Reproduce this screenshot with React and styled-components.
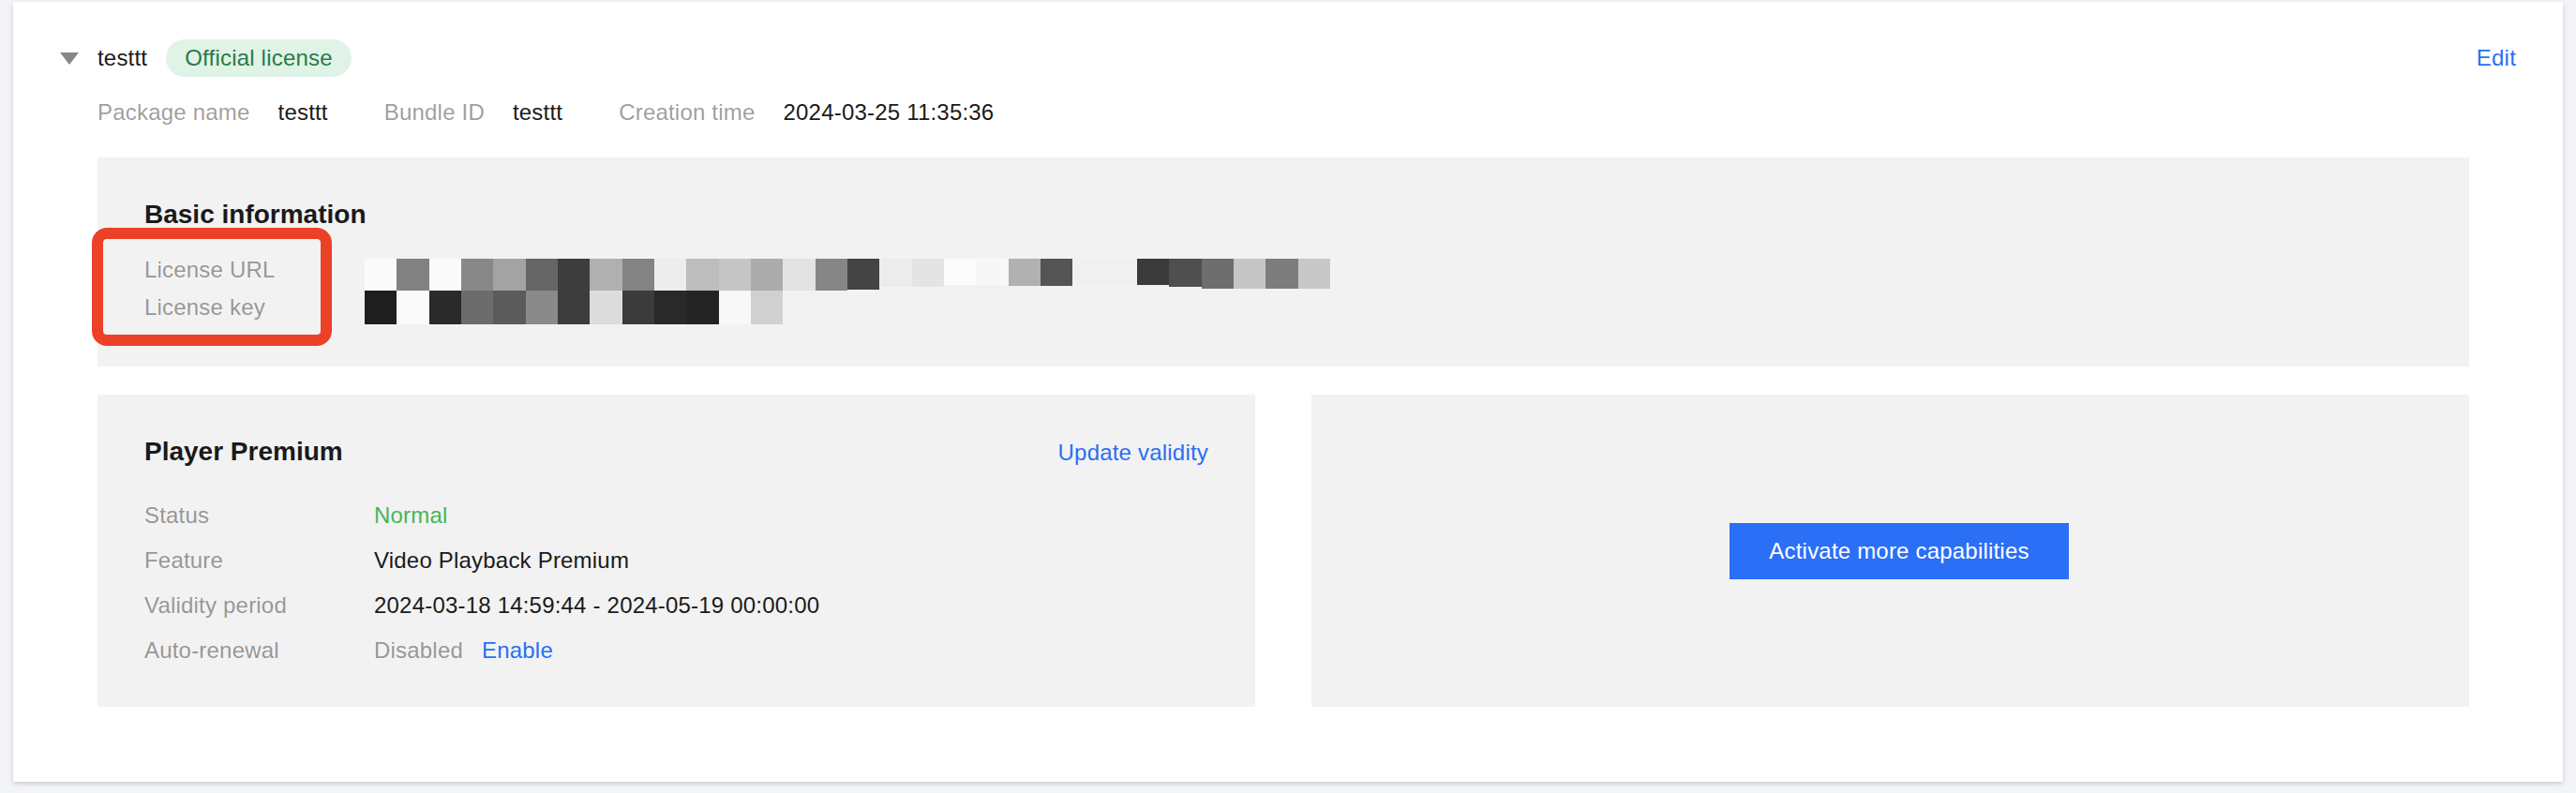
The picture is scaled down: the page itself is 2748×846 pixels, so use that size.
import React from "react";
import styled, { createGlobalStyle } from "styled-components";

const Global = createGlobalStyle`
  html, body { margin: 0; padding: 0; background: #f3f4f8; }
  body { font-family: "Liberation Sans", Arial, Helvetica, sans-serif; color: #1a1a1a; }
  * { box-sizing: border-box; }
`;

const Page = styled.div`
  padding: 2px 14px 13px 14px;
  min-height: 846px;
`;

const Card = styled.div`
  background: #ffffff;
  box-shadow: 0 2px 5px rgba(54, 58, 80, 0.22);
  padding: 40px 50px 80px 50px;
  letter-spacing: 0.2px;
`;

const Header = styled.div`
  display: flex;
  align-items: center;
  justify-content: space-between;
  height: 40px;
`;

const HeaderLeft = styled.div`
  display: flex;
  align-items: center;
`;

const Caret = styled.svg`
  width: 20px;
  height: 13px;
  margin-right: 20px;
  display: block;
`;

const Name = styled.span`
  font-size: 24px;
  line-height: 40px;
  color: #1a1a1a;
  margin-right: 20px;
`;

const Pill = styled.span`
  display: inline-flex;
  align-items: center;
  height: 40px;
  padding: 0 20px;
  border-radius: 20px;
  background: #dff3e6;
  color: #2b7a47;
  font-size: 24px;
`;

const Link = styled.a`
  font-size: 24px;
  color: #2a6ef5;
  text-decoration: none;
  cursor: pointer;
  margin-left: ${(p) => p.$gap || 0}px;
`;

const Body = styled.div`
  margin: 0 50px 0 40px;
`;

const MetaRow = styled.div`
  display: flex;
  margin-top: 20px;
  line-height: 36px;
  font-size: 24px;
`;

const MetaItem = styled.div`
  display: flex;
  gap: 30px;
  margin-right: 60px;
`;

const Label = styled.span`
  color: rgba(0, 0, 0, 0.4);
  font-size: 24px;
`;

const Value = styled.span`
  color: ${(p) => p.$color || "#1a1a1a"};
  font-size: 24px;
`;

const Panel = styled.div`
  position: relative;
  background: #f2f2f2;
  padding: ${(p) => p.$pad || "40px 50px"};
  margin-top: ${(p) => p.$mt || 0}px;
`;

const PanelHead = styled.div`
  display: flex;
  justify-content: space-between;
  align-items: baseline;
  line-height: 42px;
`;

const Title = styled.h3`
  margin: 0;
  font-size: 28px;
  font-weight: 700;
  line-height: 42px;
  letter-spacing: 0;
  color: #1a1a1a;
`;

const InfoGrid = styled.div`
  display: flex;
  margin-top: 18px;
`;

const LabelCol = styled.div`
  display: flex;
  flex-direction: column;
  width: 235px;
  line-height: 40px;
`;

const PixelCol = styled.div`
  display: flex;
  flex-direction: column;
  margin-top: 8px;
`;

const PixelRow = styled.div`
  display: flex;
  align-items: flex-start;
  height: ${(p) => p.$h}px;
`;

const Pixel = styled.span`
  display: block;
  width: 34.33px;
  flex: none;
  height: ${(p) => p.$h}px;
  background: ${(p) => p.$c};
`;

const Marker = styled.div`
  position: absolute;
  left: -6px;
  top: 75px;
  width: 256px;
  height: 126px;
  border: 12px solid #eb4127;
  border-radius: 16px;
  pointer-events: none;
`;

const Columns = styled.div`
  display: grid;
  grid-template-columns: 1fr 1fr;
  gap: 60px;
  margin-top: 30px;
`;

const Rows = styled.div`
  margin-top: 22px;
`;

const Row = styled.div`
  display: flex;
  line-height: 48px;
`;

const RowLabel = styled(Label)`
  width: 245px;
  flex: none;
`;

const CenterPanel = styled(Panel)`
  display: flex;
  align-items: center;
  justify-content: center;
  padding: 0 0 0 19px;
`;

const Button = styled.button`
  height: 60px;
  padding: 0 42px;
  border: none;
  border-radius: 0;
  background: #2b6ff6;
  color: #ffffff;
  font-family: "Liberation Sans", Arial, sans-serif;
  font-size: 24px;
  letter-spacing: 0.2px;
  cursor: pointer;
`;

const row1 = [
  "#fafafa", "#828282", "#fafafa", "#888888", "#a3a3a3", "#666666", "#3d3d3d",
  "#b0b0b0", "#838383", "#ededed", "#bdbdbd", "#c5c5c5", "#ababab", "#e3e3e3",
  "#868686", "#444444", "#ececec", "#e4e4e4", "#fcfcfc", "#f7f7f7", "#b1b1b1",
  "#545454", "#f0f0f0", "#f0f0f0", "#3b3b3b", "#4f4f4f", "#6e6e6e", "#c6c6c6",
  "#7d7d7d", "#c8c8c8",
];
const row1h = [
  34, 34, 34, 34, 34, 34, 34, 34, 34, 34, 34, 34, 34, 34, 34, 33, 30, 30, 28,
  28, 29, 29, 27, 27, 28, 30, 32, 32, 32, 32,
];
const row2 = [
  "#1e1e1e", "#fafafa", "#2a2a2a", "#6c6c6c", "#5b5b5b", "#8a8a8a", "#3c3c3c",
  "#dcdcdc", "#3b3b3b", "#292929", "#242424", "#f8f8f8", "#d0d0d0",
];

export default function App() {
  return (
    <>
      <Global />
      <Page>
        <Card>
          <Header>
            <HeaderLeft>
              <Caret viewBox="0 0 20 13">
                <path d="M0 0 H20 L10 13 Z" fill="#888888" />
              </Caret>
              <Name>testtt</Name>
              <Pill>Official license</Pill>
            </HeaderLeft>
            <Link>Edit</Link>
          </Header>
          <Body>
            <MetaRow>
              <MetaItem>
                <Label>Package name</Label>
                <Value>testtt</Value>
              </MetaItem>
              <MetaItem>
                <Label>Bundle ID</Label>
                <Value>testtt</Value>
              </MetaItem>
              <MetaItem>
                <Label>Creation time</Label>
                <Value>2024-03-25 11:35:36</Value>
              </MetaItem>
            </MetaRow>

            <Panel $mt={30} $pad="40px 50px 43px 50px">
              <Title>Basic information</Title>
              <InfoGrid>
                <LabelCol>
                  <Label>License URL</Label>
                  <Label>License key</Label>
                </LabelCol>
                <PixelCol>
                  <PixelRow $h={34}>
                    {row1.map((c, i) => (
                      <Pixel key={i} $c={c} $h={row1h[i]} />
                    ))}
                  </PixelRow>
                  <PixelRow $h={36}>
                    {row2.map((c, i) => (
                      <Pixel key={i} $c={c} $h={36} />
                    ))}
                  </PixelRow>
                </PixelCol>
              </InfoGrid>
              <Marker />
            </Panel>

            <Columns>
              <Panel $pad="40px 50px 36px 50px">
                <PanelHead>
                  <Title>Player Premium</Title>
                  <Link>Update validity</Link>
                </PanelHead>
                <Rows>
                  <Row>
                    <RowLabel>Status</RowLabel>
                    <Value $color="#45b65b">Normal</Value>
                  </Row>
                  <Row>
                    <RowLabel>Feature</RowLabel>
                    <Value>Video Playback Premium</Value>
                  </Row>
                  <Row>
                    <RowLabel>Validity period</RowLabel>
                    <Value>2024-03-18 14:59:44 - 2024-05-19 00:00:00</Value>
                  </Row>
                  <Row>
                    <RowLabel>Auto-renewal</RowLabel>
                    <Value $color="rgba(0,0,0,0.4)">Disabled</Value>
                    <Link $gap={20}>Enable</Link>
                  </Row>
                </Rows>
              </Panel>
              <CenterPanel>
                <Button>Activate more capabilities</Button>
              </CenterPanel>
            </Columns>
          </Body>
        </Card>
      </Page>
    </>
  );
}
